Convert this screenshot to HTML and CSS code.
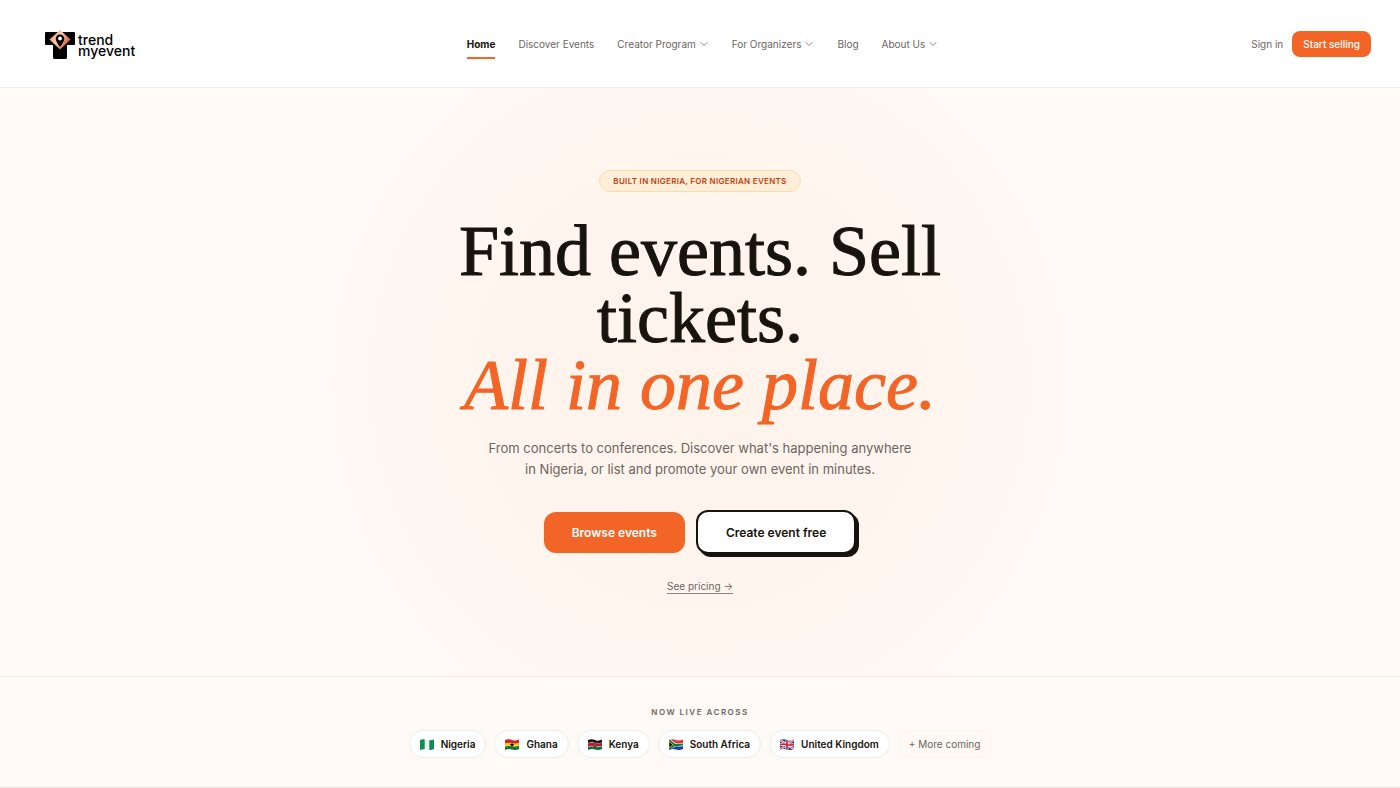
FILE: index.html
```html
<!DOCTYPE html>
<html lang="en">
<head>
  <meta charset="UTF-8">
  <meta name="viewport" content="width=device-width, initial-scale=1.0">
  <title>Trend My Event</title>
  <link rel="stylesheet" href="styles.css">
</head>
<body>

  <header class="site-header">
    <a class="logo" href="#">
      <svg class="logo-mark" width="30" height="29" viewBox="0 0 30 29" aria-hidden="true">
        <defs>
          <linearGradient id="pin" x1="0" y1="0" x2="1" y2="0.6">
            <stop offset="0" stop-color="#f08a3c"/>
            <stop offset="0.5" stop-color="#f8cdb0"/>
            <stop offset="1" stop-color="#d4552f"/>
          </linearGradient>
        </defs>
        <path d="M1 2h28q1 0 1 1v11q0 1-1 1h-7v12.500q0 1.500-1.500 1.500h-11q-1.500 0-1.500-1.500V15H1q-1 0-1-1V3q0-1 1-1z" fill="#000"/>
        <path d="M15 0l10.500 9.500L15 19.500 4.500 9.500z" fill="url(#pin)"/>
        <path d="M15 4.500a4.300 4.300 0 0 1 4.300 4.300c0 3-4.300 8-4.300 8s-4.300-5-4.300-8A4.300 4.300 0 0 1 15 4.500z" fill="#000"/>
        <circle cx="15" cy="8.500" r="1.900" fill="#fff"/>
      </svg>
      <span class="logo-text">trend<br>myevent</span>
    </a>

    <nav class="main-nav">
      <a class="nav-link active" href="#">Home</a>
      <a class="nav-link" href="#">Discover Events</a>
      <button class="nav-link" type="button">Creator Program
        <svg class="chevron" viewBox="0 0 10 10" aria-hidden="true"><path d="M2 3.500l3 3 3-3"/></svg>
      </button>
      <button class="nav-link" type="button">For Organizers
        <svg class="chevron" viewBox="0 0 10 10" aria-hidden="true"><path d="M2 3.500l3 3 3-3"/></svg>
      </button>
      <a class="nav-link" href="#">Blog</a>
      <button class="nav-link" type="button">About Us
        <svg class="chevron" viewBox="0 0 10 10" aria-hidden="true"><path d="M2 3.500l3 3 3-3"/></svg>
      </button>
    </nav>

    <div class="header-actions">
      <a class="sign-in" href="#">Sign in</a>
      <button class="btn-small" type="button">Start selling</button>
    </div>
  </header>

  <main>
    <section class="hero">
      <span class="badge">Built in Nigeria, for Nigerian events</span>
      <h1>Find events. Sell tickets. <em>All in one place.</em></h1>
      <p class="lead">From concerts to conferences. Discover what's happening anywhere in Nigeria, or list and promote your own event in minutes.</p>
      <div class="hero-buttons">
        <button class="btn btn-primary" type="button">Browse events</button>
        <button class="btn btn-outline" type="button">Create event free</button>
      </div>
      <a class="pricing-link" href="#">See pricing →</a>
    </section>

    <section class="countries">
      <h2>Now live across</h2>
      <ul class="country-list">
        <li class="country">
          <svg class="flag" viewBox="0 0 14 11" aria-hidden="true">
            <path d="M0 1q3.500-1.500 7 0t7-.5v9.500q-3.500 1.500-7 .5t-7 .5z" fill="#f1f1ee"/>
            <path d="M0 1q2.500-1 4.700-.6v9.900Q2.500 10 0 11zM9.300 1.300q2.500.2 4.700-.8V10q-2.200 1-4.700.9z" fill="#0b8f57"/>
          </svg>
          Nigeria
        </li>
        <li class="country">
          <svg class="flag" viewBox="0 0 14 11" aria-hidden="true">
            <path d="M0 1q3.500-1.500 7 0t7-.5v9.500q-3.500 1.500-7 .5t-7 .5z" fill="#f9cf1b"/>
            <path d="M0 1q3.500-1.500 7 0t7-.5v3.200q-3.500 1.300-7 .4t-7 .2z" fill="#d5202f"/>
            <path d="M0 7.700q3.500-1.200 7-.2t7-.7V10q-3.500 1.500-7 .5t-7 .5z" fill="#0a7a42"/>
            <path d="M7 3.400l.6 1.700h1.800L8 6.200l.5 1.700L7 6.900l-1.500 1L6 6.200 4.600 5.100h1.800z" fill="#111"/>
          </svg>
          Ghana
        </li>
        <li class="country">
          <svg class="flag" viewBox="0 0 14 11" aria-hidden="true">
            <path d="M0 1q3.500-1.500 7 0t7-.5v9.500q-3.500 1.500-7 .5t-7 .5z" fill="#fff"/>
            <path d="M0 1q3.500-1.500 7 0t7-.5v2.900q-3.500 1.300-7 .4t-7 .1z" fill="#181414"/>
            <path d="M0 4.300q3.500-1.200 7-.2t7-.3v3q-3.500 1.300-7 .4t-7 .3z" fill="#c4122f"/>
            <path d="M0 8q3.500-1.200 7-.4t7-.4V10q-3.500 1.500-7 .5t-7 .5z" fill="#0a7038"/>
            <ellipse cx="7" cy="5.600" rx="1.500" ry="2.700" fill="#7b1420"/>
            <path d="M4.500 2.500l5 6.200M9.500 2.500l-5 6.200" stroke="#e8d9d6" stroke-width="0.300"/>
          </svg>
          Kenya
        </li>
        <li class="country">
          <svg class="flag" viewBox="0 0 14 11" aria-hidden="true">
            <path d="M0 1q3.500-1.500 7 0t7-.5v9.500q-3.500 1.500-7 .5t-7 .5z" fill="#fff"/>
            <path d="M1.500.5Q4.500-.1 7 1t7-.5v3.400q-3.500 1.200-7.300.4z" fill="#dc3a33"/>
            <path d="M6.700 7.200q3.700.9 7.300-.3V10q-3.500 1.500-7 .5t-5.500 0z" fill="#1b3fa0"/>
            <path d="M0 1.200l5.800 4.500L0 10.600M5.800 5.700q4 .8 8.200-.4" fill="none" stroke="#0a7a4a" stroke-width="1.900"/>
            <path d="M0 2.400l4 3.300L0 9.200z" fill="#111" stroke="#f5b921" stroke-width="0.700"/>
          </svg>
          South Africa
        </li>
        <li class="country">
          <svg class="flag" viewBox="0 0 14 11" aria-hidden="true">
            <path d="M0 1q3.500-1.500 7 0t7-.5v9.500q-3.500 1.500-7 .5t-7 .5z" fill="#24347f"/>
            <path d="M.3 1.200l13.400 8.900M13.700.8L.3 10.500" stroke="#fff" stroke-width="2"/>
            <path d="M.3 1.200l13.400 8.900M13.700.8L.3 10.500" stroke="#d0213a" stroke-width="0.800"/>
            <path d="M7 1v9.500M0 5.700q3.500-1 7 0t7-.3" fill="none" stroke="#fff" stroke-width="3"/>
            <path d="M7 1v9.500M0 5.700q3.500-1 7 0t7-.3" fill="none" stroke="#d0213a" stroke-width="1.700"/>
          </svg>
          United Kingdom
        </li>
        <li class="country more">+ More coming</li>
      </ul>
    </section>
  </main>

</body>
</html>
```

FILE: styles.css
```css
* { box-sizing: border-box; }
body { margin: 0; font-family: Inter, "Liberation Sans", sans-serif; font-size: 10px; color: #17130d; background: #fffaf5; }
a { color: inherit; text-decoration: none; }
button { font-family: inherit; cursor: pointer; }

/* header */
.site-header { display: grid; grid-template-columns: 1fr auto 1fr; align-items: center; height: 88px; padding: 0 29px 0 34px; background: #fff; border-bottom: 1px solid #f0ece8; }
.logo { display: flex; align-items: center; gap: 3px; padding: 2px 0 0 11px; color: #000; }
.logo-text { font-size: 14px; font-weight: 500; line-height: 11px; }
.main-nav { display: flex; align-items: center; gap: 23px; }
.nav-link { display: flex; align-items: center; gap: 3px; padding: 0; border: 0; background: none; font-size: 10px; line-height: 26px; color: #6b6661; white-space: nowrap; }
.nav-link.active { font-weight: 700; color: #17130d; box-shadow: 0 2px 0 #f26526; }
.chevron { width: 10px; height: 10px; fill: none; stroke: #8a8580; stroke-width: 1; stroke-linecap: round; stroke-linejoin: round; }
.header-actions { display: flex; align-items: center; justify-content: flex-end; gap: 9px; }
.sign-in { color: #6b6661; }
.btn-small { height: 26px; padding: 0 11px; border: 0; border-radius: 8px; background: #f26526; color: #fff; font-size: 10px; font-weight: 500; }

/* hero */
.hero { display: flex; flex-direction: column; align-items: center; padding: 82px 24px; text-align: center; background: radial-gradient(circle 400px at center, #fff3eb 0%, #fff5ee 50%, #fffaf5 100%); border-bottom: 1px solid #f0ebe6; }
.badge { padding: 0 13px; border: 1px solid #fbdcae; border-radius: 11px; background: #ffefd8; color: #c2410c; font-size: 8px; font-weight: 600; line-height: 20px; letter-spacing: 0.3px; text-transform: uppercase; }
h1 { max-width: 640px; margin: 26px 0 19px; font-family: "Liberation Serif", serif; font-size: 72px; font-weight: 400; line-height: 67px; -webkit-text-stroke: 1px; }
h1 em { display: block; color: #f26526; }
.lead { max-width: 432px; margin: 0; font-size: 13px; line-height: 21px; color: #6b6661; }
.hero-buttons { display: flex; align-items: center; gap: 11px; margin-top: 30px; }
.btn { padding: 0 28px; border-radius: 12px; font-size: 12px; font-weight: 600; }
.btn-primary { height: 41px; border: 0; background: #f26526; color: #fff; }
.btn-outline { height: 44px; border: 2px solid #17130d; background: #fff; color: #17130d; box-shadow: 3px 3px 0 #17130d; }
.pricing-link { margin-top: 25px; border-bottom: 1px solid #8a8580; line-height: 14px; color: #6b6661; }

/* countries */
.countries { padding: 29px 24px; border-bottom: 1px solid #e8e4e0; text-align: center; }
.countries h2 { margin: 0 0 11px; font-size: 8px; font-weight: 600; line-height: 13px; letter-spacing: 1.5px; text-transform: uppercase; color: #6b6661; }
.country-list { display: flex; flex-wrap: wrap; justify-content: center; gap: 8px; margin: 0; padding: 0; list-style: none; }
.country { display: flex; align-items: center; gap: 7px; height: 28px; padding: 0 10px; border: 1px solid #f0ebe6; border-radius: 14px; background: #fff; font-weight: 600; }
.country.more { border-color: #faf3ed; background: none; font-weight: 400; color: #6b6661; }
.flag { width: 14px; height: 11px; }
```
